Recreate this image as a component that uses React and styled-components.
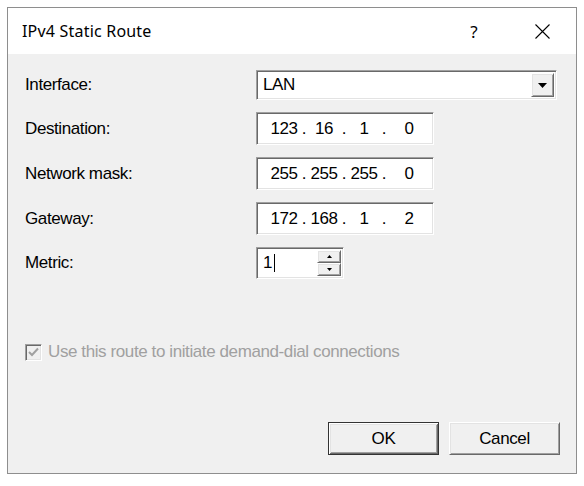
import React from 'react';
import styled, { createGlobalStyle, css } from 'styled-components';

const GlobalStyle = createGlobalStyle`
    body {
        margin: 0;
        background: #fff;
        font-family: "Liberation Sans", Arial, sans-serif;
        color: #000;
    }
`

const sunken = css`
    border: 1px solid;
    border-color: #a0a0a0 #fff #fff #a0a0a0;
    box-shadow: inset 1px 1px #696969, inset -1px -1px #e3e3e3;
    background: #fff;
    box-sizing: border-box;
`

const raised = css`
    border: 1px solid;
    border-color: #fff #696969 #696969 #fff;
    box-shadow: inset 1px 1px #e3e3e3, inset -1px -1px #a0a0a0;
    background: #f0f0f0;
    box-sizing: border-box;
`

const uiText = css`
    font-size: 17px;
    letter-spacing: -0.4px;
`

const Window = styled.div`
    margin: 7px 0 0 7px;
    width: 570px;
    height: 467px;
    border: 1px solid #8e8e8e;
    box-sizing: border-box;
    display: flex;
    flex-direction: column;
`

const TitleBar = styled.div`
    height: 46px;
    background: #fff;
    display: flex;
    align-items: center;
    padding: 0 0 0 14px;
`

const TitleText = styled.div`
    flex: 1;
    font-family: "Noto Sans", sans-serif;
    font-size: 16px;
    letter-spacing: 0.2px;
    color: #000;
`

const TitleButton = styled.div`
    width: ${p => p.$w}px;
    height: 46px;
    display: flex;
    align-items: center;
    justify-content: center;
    font-family: "Noto Sans", sans-serif;
    font-size: 17px;
    color: #000;
`

const Body = styled.div`
    flex: 1;
    background: #f0f0f0;
    padding: 16px 16px 18px 17px;
    display: flex;
    flex-direction: column;
`

const Form = styled.div`
    display: grid;
    grid-template-columns: 231px auto;
    row-gap: 12px;
    align-items: center;
`

const Label = styled.div`
    ${uiText}
`

const Combo = styled.div`
    ${sunken}
    width: 301px;
    height: 30px;
    display: flex;
    align-items: stretch;
    padding: 2px;
`

const ComboText = styled.div`
    ${uiText}
    flex: 1;
    display: flex;
    align-items: center;
    padding-left: 4px;
`

const DropButton = styled.div`
    ${raised}
    width: 23px;
    display: flex;
    align-items: center;
    justify-content: center;
`

const IpBox = styled.div`
    ${sunken}
    ${uiText}
    width: 178px;
    height: 33px;
    display: flex;
    align-items: center;
    padding: 0 2px 0 10px;
`

const Octet = styled.span`
    width: ${p => (p.$last ? 'auto' : '34px')};
    flex: ${p => (p.$last ? 1 : 'none')};
    text-align: center;
`

const Dot = styled.span`
    width: 6px;
    text-align: center;
`

const Spin = styled.div`
    ${sunken}
    width: 88px;
    height: 32px;
    display: flex;
    padding: 2px;
`

const SpinText = styled.div`
    ${uiText}
    flex: 1;
    display: flex;
    align-items: center;
    padding-left: 4px;
`

const Caret = styled.span`
    display: inline-block;
    width: 1px;
    height: 18px;
    background: #000;
    margin-left: 2px;
`

const SpinButtons = styled.div`
    width: 24px;
    display: flex;
    flex-direction: column;
`

const SpinButton = styled.div`
    ${raised}
    flex: 1;
    display: flex;
    align-items: center;
    justify-content: center;
`

const CheckRow = styled.div`
    margin-top: 63px;
    display: flex;
    align-items: center;
    gap: 6px;
`

const CheckBox = styled.div`
    ${sunken}
    background: #f0f0f0;
    width: 17px;
    height: 17px;
    display: flex;
    align-items: center;
    justify-content: center;
`

const CheckLabel = styled.div`
    ${uiText}
    color: #a0a0a0;
`

const Footer = styled.div`
    margin-top: auto;
    display: flex;
    justify-content: flex-end;
    gap: 10px;
`

const Button = styled.div`
    ${raised}
    ${uiText}
    width: 111px;
    height: 33px;
    display: flex;
    align-items: center;
    justify-content: center;
    ${p => p.$default && css`
        border: 1px solid #333;
        box-shadow: inset 1px 1px #fff, inset -1px -1px #696969, inset 2px 2px #e3e3e3, inset -2px -2px #a0a0a0;
    `}
`

const Triangle = ({ w, h }) => (
    <svg width={w} height={h} viewBox={`0 0 ${w} ${h}`}>
        <polygon points={`0,0 ${w},0 ${w / 2},${h}`} fill="#000" />
    </svg>
)

const UpTriangle = ({ w, h }) => (
    <svg width={w} height={h} viewBox={`0 0 ${w} ${h}`}>
        <polygon points={`0,${h} ${w},${h} ${w / 2},0`} fill="#000" />
    </svg>
)

const IpAddress = ({ value }) => {
    const parts = value.split('.');
    return (
        <IpBox>
            {parts.map((p, i) => (
                <React.Fragment key={i}>
                    <Octet $last={i === parts.length - 1}>{p}</Octet>
                    {i < parts.length - 1 && <Dot>.</Dot>}
                </React.Fragment>
            ))}
        </IpBox>
    )
}

const App = () => {
    return (
        <>
            <GlobalStyle />
            <Window>
                <TitleBar>
                    <TitleText>IPv4 Static Route</TitleText>
                    <TitleButton $w={46}>?</TitleButton>
                    <TitleButton $w={11} />
                    <TitleButton $w={68}>
                        <svg width="15" height="15" viewBox="0 0 15 15">
                            <path d="M0.5 0.5 L14.5 14.5 M14.5 0.5 L0.5 14.5" stroke="#000" strokeWidth="1.1" fill="none" />
                        </svg>
                    </TitleButton>
                </TitleBar>
                <Body>
                    <Form>
                        <Label>Interface:</Label>
                        <Combo>
                            <ComboText>LAN</ComboText>
                            <DropButton><Triangle w={9} h={5} /></DropButton>
                        </Combo>

                        <Label>Destination:</Label>
                        <IpAddress value="123.16.1.0" />

                        <Label>Network mask:</Label>
                        <IpAddress value="255.255.255.0" />

                        <Label>Gateway:</Label>
                        <IpAddress value="172.168.1.2" />

                        <Label>Metric:</Label>
                        <Spin>
                            <SpinText>1<Caret /></SpinText>
                            <SpinButtons>
                                <SpinButton><UpTriangle w={5} h={3} /></SpinButton>
                                <SpinButton><Triangle w={5} h={3} /></SpinButton>
                            </SpinButtons>
                        </Spin>
                    </Form>

                    <CheckRow>
                        <CheckBox>
                            <svg width="11" height="11" viewBox="0 0 11 11">
                                <path d="M1 5 L4 8 L10 1.5" stroke="#a0a0a0" strokeWidth="2" fill="none" />
                            </svg>
                        </CheckBox>
                        <CheckLabel>Use this route to initiate demand-dial connections</CheckLabel>
                    </CheckRow>

                    <Footer>
                        <Button $default>OK</Button>
                        <Button>Cancel</Button>
                    </Footer>
                </Body>
            </Window>
        </>
    )
}

export default App
